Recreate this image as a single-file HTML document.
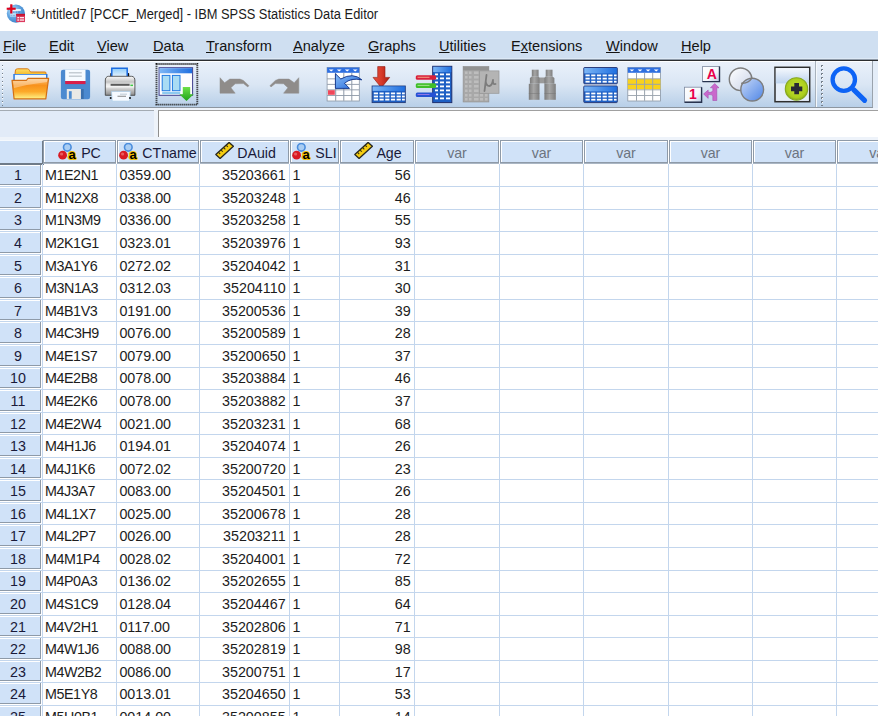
<!DOCTYPE html>
<html><head><meta charset="utf-8"><style>
*{margin:0;padding:0;box-sizing:border-box}
html,body{width:878px;height:716px;overflow:hidden;background:#fff;font-family:"Liberation Sans",sans-serif;position:relative}
#grid{position:absolute;left:0;top:0;width:878px;height:716px}
.corner{position:absolute;left:0;top:140px;width:44px;height:25px;background:#d0e2f8;border-right:2px solid #6f7b88;border-bottom:2px solid #6f7b88;border-top:1px solid #f5f9fd}
.vl{position:absolute;top:164px;width:1px;height:560px;background:#c3d6ed}
.hl{position:absolute;left:0;width:880px;height:1px;background:#c3d6ed}
.hb{position:absolute;top:140px;height:23px;background:#d0e2f8;border:1px solid #8e9aa8;box-shadow:inset 1px 1px 0 #fff,0 1px 0 #aab6c4;text-align:center;white-space:nowrap;overflow:hidden;color:#1a1a3a}
.hb span{font-size:14.2px;line-height:20px;display:inline-block;vertical-align:top;margin-top:1.6px}
.hb.var span{color:#6c7480}
.ic{display:inline-block;vertical-align:top;margin-top:2px;margin-right:4px;position:relative}
.ic.sc{margin-top:1px;margin-right:3px}
.rh{position:absolute;left:0;width:41px;background:#d0e2f8;border-right:1px solid #8e9aa8;border-bottom:1px solid #8e9aa8;box-shadow:inset 0 1px 0 #fff;text-align:center}
.rh span{position:absolute;left:0;width:36px;text-align:center;font-size:14.3px;line-height:16px;color:#1a1a3a}
.t{position:absolute;font-size:14.3px;line-height:16px;margin-top:-12.84px;white-space:nowrap;color:#1c1c1c}

#title{position:absolute;left:0;top:0;width:878px;height:31px;background:#fff}
#title .txt{position:absolute;left:31px;top:5px;font-size:14px;line-height:18px;color:#1b1b1b;white-space:nowrap;transform:scaleX(0.918);transform-origin:0 0}
#menu{position:absolute;left:0;top:31px;width:878px;height:27px;background:#cfdff1}
#menu span{position:absolute;top:5.5px;font-size:15.5px;line-height:17px;color:#141414;white-space:nowrap;transform:scaleX(0.94);transform-origin:0 0}
#menu u{text-decoration:underline;text-underline-offset:1px}
#ml1{position:absolute;left:0;top:58px;width:878px;height:1px;background:#dde9f6}
#ml2{position:absolute;left:0;top:59px;width:878px;height:1px;background:#8e9aa8}
#ml3{position:absolute;left:0;top:60px;width:878px;height:1px;background:#2b2d30}
#ml4{position:absolute;left:0;top:61px;width:878px;height:1px;background:#fdfeff}
#tb{position:absolute;left:0;top:62px;width:872px;height:45px;background:linear-gradient(#e9f0fa,#dae6f4 50%,#b8cfe8)}
#tb2{position:absolute;left:872px;top:61px;width:1px;height:47px;background:#9aa3ad}
#tbline{position:absolute;left:0;top:107px;width:873px;height:1px;background:#8d96a0}
#ce{position:absolute;left:0;top:108px;width:878px;height:32px;background:#eef3fa}
#namebox{position:absolute;left:0;top:110px;width:154px;height:26.5px;background:#e2ebf8;border-top:1px solid #a4abb3}
#cellin{position:absolute;left:158px;top:110px;width:720px;height:26.5px;background:#fff;border-top:1px solid #a0a0a0;border-left:1px solid #8f8f8f}

.t.s{letter-spacing:-0.4px}

#tb3{position:absolute;left:873px;top:61px;width:5px;height:47px;background:#e4edf8}

</style></head><body>
<div id="title"><div class="txt">*Untitled7 [PCCF_Merged] - IBM SPSS Statistics Data Editor</div></div>
<div id="menu">
<span style="left:3px"><u>F</u>ile</span>
<span style="left:48.5px"><u>E</u>dit</span>
<span style="left:97px"><u>V</u>iew</span>
<span style="left:152.5px"><u>D</u>ata</span>
<span style="left:205.5px"><u>T</u>ransform</span>
<span style="left:292.5px"><u>A</u>nalyze</span>
<span style="left:367.5px"><u>G</u>raphs</span>
<span style="left:438.5px"><u>U</u>tilities</span>
<span style="left:510.5px">E<u>x</u>tensions</span>
<span style="left:605.5px"><u>W</u>indow</span>
<span style="left:680.5px"><u>H</u>elp</span>
</div>
<div id="ml1"></div><div id="ml2"></div><div id="ml3"></div><div id="ml4"></div>
<div id="tb"></div>
<div id="tb2"></div><div id="tb3"></div>
<div id="tbline"></div>
<div id="ce"></div>
<div id="namebox"></div>
<div id="cellin"></div>
<svg id="icons" width="878" height="112" viewBox="0 0 878 112" style="position:absolute;left:0;top:0">
<defs>
<linearGradient id="gFold" x1="0" y1="0" x2="0" y2="1"><stop offset="0" stop-color="#fcc37a"/><stop offset="0.35" stop-color="#f8921c"/><stop offset="0.65" stop-color="#fcaa2a"/><stop offset="1" stop-color="#fff488"/></linearGradient>
<linearGradient id="gTab" x1="0" y1="0" x2="0" y2="1"><stop offset="0" stop-color="#ffe066"/><stop offset="1" stop-color="#f0b020"/></linearGradient>
<linearGradient id="gHdr" x1="0" y1="0" x2="1" y2="0"><stop offset="0" stop-color="#7db6f5"/><stop offset="1" stop-color="#1f6fe0"/></linearGradient>
<linearGradient id="gPaper" x1="0" y1="0" x2="0" y2="1"><stop offset="0" stop-color="#9fd0fb"/><stop offset="1" stop-color="#f4faff"/></linearGradient>
<linearGradient id="gPrn" x1="0" y1="0" x2="0" y2="1"><stop offset="0" stop-color="#f2f2f2"/><stop offset="0.5" stop-color="#d8d8d8"/><stop offset="1" stop-color="#a8a8a8"/></linearGradient>
<linearGradient id="gRed" x1="0" y1="0" x2="1" y2="0"><stop offset="0" stop-color="#e2503c"/><stop offset="0.5" stop-color="#d83a2a"/><stop offset="1" stop-color="#a81c10"/></linearGradient>
<linearGradient id="gC1" x1="0" y1="0" x2="1" y2="1"><stop offset="0" stop-color="#ffffff"/><stop offset="1" stop-color="#c9d3e8"/></linearGradient>
<linearGradient id="gC2" x1="0" y1="0" x2="1" y2="1"><stop offset="0" stop-color="#c7d8f7"/><stop offset="1" stop-color="#4f86e6"/></linearGradient>
<linearGradient id="gAdd" x1="0" y1="0" x2="0" y2="1"><stop offset="0" stop-color="#f4f8fd"/><stop offset="1" stop-color="#bdd3ee"/></linearGradient>
<linearGradient id="gArr" x1="0" y1="0" x2="1" y2="1"><stop offset="0" stop-color="#8cc0f8"/><stop offset="1" stop-color="#1d62d8"/></linearGradient>
<linearGradient id="gGreen" x1="0" y1="0" x2="0" y2="1"><stop offset="0" stop-color="#6ee04a"/><stop offset="1" stop-color="#1fa31a"/></linearGradient>
<pattern id="grip" x="0" y="0" width="4" height="4" patternUnits="userSpaceOnUse"><rect x="1" y="1" width="2" height="2" fill="#75808c"/><rect x="2" y="2" width="1.2" height="1.2" fill="#fff"/></pattern>
</defs>
<!-- app icon -->
<defs><radialGradient id="gApp" cx="0.35" cy="0.35" r="0.7"><stop offset="0" stop-color="#c4e6fb"/><stop offset="0.55" stop-color="#5fa3e0"/><stop offset="1" stop-color="#3b7fc8"/></radialGradient></defs>
<circle cx="15.9" cy="13.6" r="9.1" fill="url(#gApp)"/>
<rect x="12.7" y="9.2" width="8.1" height="1.6" fill="#fff"/>
<g fill="#2f6fc0" opacity="0.85"><rect x="13" y="11.6" width="1.6" height="1"/><rect x="15.6" y="11.6" width="1.6" height="1"/><rect x="18.2" y="11.6" width="1.6" height="1"/><rect x="10.6" y="15" width="1.6" height="1"/><rect x="13" y="15" width="2" height="1"/></g>
<rect x="10" y="13.2" width="6" height="3.6" fill="#e3f3fc" opacity="0.5"/>
<rect x="16.2" y="13.9" width="8.8" height="8.2" fill="#dc3a5e"/>
<rect x="16.2" y="13.9" width="8.8" height="1.8" fill="#c8102e"/>
<g fill="#fff" opacity="0.9"><rect x="17.3" y="17" width="1.8" height="1.3"/><rect x="19.8" y="17" width="4.2" height="1.3"/><rect x="17.3" y="19.4" width="1.8" height="1.3"/><rect x="19.8" y="19.4" width="4.2" height="1.3"/></g>
<rect x="6.7" y="7.7" width="9" height="2.1" fill="#e0001c"/>
<rect x="10.2" y="4.3" width="2.2" height="9.2" fill="#e0001c"/>
<!-- grips -->
<rect x="2" y="63" width="3" height="43" fill="url(#grip)"/>
<rect x="820" y="63" width="3" height="43" fill="url(#grip)"/>
<!-- separators -->
<rect x="815" y="61" width="1" height="46" fill="#a8b2bd"/>
<rect x="816" y="61" width="1" height="46" fill="#f4f8fc"/>
<!-- folder -->
<path d="M15 74 L15.5 70 Q16 68.8 17.5 68.8 L27.5 68.8 Q28.8 68.8 29.5 70.5 L30.5 72 L45 72 Q46 72 46 73 L46 76 L15 76 Z" fill="url(#gTab)" stroke="#d7781a" stroke-width="1"/>
<rect x="13.3" y="74" width="34.2" height="6" fill="#2a78e0"/>
<rect x="14.8" y="74.8" width="31.2" height="5.2" fill="#eef8ff"/>
<path d="M12 80.3 L26.5 80.3 L28 78.3 L48.6 78.3 L45.8 98.9 L14.1 98.9 Z" fill="url(#gFold)" stroke="#d36f14" stroke-width="1.2" stroke-linejoin="round"/>
<path d="M13 81 L26.5 81 L28 79 L47.5 79 L47 82 Q30 84 14 88 Z" fill="#fff" opacity="0.35"/>
<!-- save -->
<rect x="60.9" y="69.7" width="29.2" height="29.5" rx="2.2" fill="#4b8ad0"/>
<rect x="65.2" y="69.7" width="20.3" height="11.3" fill="#f6fbff"/>
<rect x="68.9" y="72.2" width="12.9" height="1.2" fill="#b9c1c9"/>
<rect x="68.9" y="75.6" width="12.9" height="1.2" fill="#b9c1c9"/>
<rect x="65.2" y="81" width="20.3" height="3.1" fill="#d81e4a"/>
<rect x="80.9" y="89" width="2.8" height="10" fill="#2f5f98" opacity="0.6"/>
<rect x="66.8" y="89" width="14.1" height="10" fill="#e9e9e6"/>
<rect x="68.9" y="91.2" width="2.8" height="7.6" fill="#4b8ad0"/>
<!-- print -->
<defs><linearGradient id="gPrn2" x1="0" y1="0" x2="0" y2="1"><stop offset="0" stop-color="#fafafa"/><stop offset="0.3" stop-color="#c4c4c4"/><stop offset="0.42" stop-color="#e8e8e8"/><stop offset="0.55" stop-color="#f4f4f4"/><stop offset="0.65" stop-color="#d0d0d0"/><stop offset="1" stop-color="#8a8a8a"/></linearGradient>
<linearGradient id="gPap2" x1="0" y1="0" x2="0" y2="1"><stop offset="0" stop-color="#8ccaf8"/><stop offset="1" stop-color="#ffffff"/></linearGradient></defs>
<rect x="110.3" y="73" width="2" height="4.5" rx="0.8" fill="#111"/><rect x="127.2" y="73" width="2" height="4.5" rx="0.8" fill="#111"/>
<path d="M111.8 78.8 L111.8 68.2 L127.2 68.2 L127.2 78.8" fill="url(#gPap2)" stroke="#1a6be0" stroke-width="1.5"/>
<path d="M105.3 95.3 L105.3 80 Q105.3 77.6 107.2 76.6 L108.5 76.3 L131.6 76.3 L133 76.6 Q134.9 77.6 134.9 80 L134.9 95.3 Z" fill="url(#gPrn2)" stroke="#3a3a3a" stroke-width="0.8"/>
<rect x="110.6" y="83.8" width="19" height="2" fill="#5a5a5a"/>
<rect x="130.4" y="84.6" width="2.6" height="1.5" fill="#3ccc44"/>
<path d="M111.5 91.4 L130.4 91.4 L129.6 101.2 L112.2 101.2 Z" fill="#f6faff" stroke="#a9cdea" stroke-width="0.7"/>
<rect x="117.5" y="95.8" width="8.5" height="0.8" fill="#6a6a6a"/><rect x="120" y="93.8" width="7" height="0.6" fill="#9aa7b4"/>
<circle cx="110.7" cy="98" r="1" fill="#111"/><circle cx="130" cy="98" r="1" fill="#111"/>
<!-- recall dialog -->
<rect x="156.5" y="64" width="40.8" height="40.6" fill="none" stroke="#1a1a1a" stroke-width="1.9" stroke-dasharray="1.1 0.9"/>
<rect x="159.1" y="67.7" width="33.5" height="27.6" fill="#fdfdff" stroke="#3e3e8c" stroke-width="1"/>
<rect x="159.6" y="68.2" width="32.5" height="5.1" fill="url(#gHdr)"/>
<rect x="162.2" y="75.4" width="7.7" height="15.3" fill="#a9dcf4" stroke="#1e78e0" stroke-width="1"/>
<rect x="172.4" y="75.4" width="7.6" height="15.3" fill="#a9dcf4" stroke="#1e78e0" stroke-width="1"/>
<rect x="162.2" y="91.8" width="18" height="2.4" fill="#8ccaf0"/>
<path d="M182.8 86.9 L190.2 86.9 L190.2 94.2 L193.7 94.2 L186.5 100.9 L179.3 94.2 L182.8 94.2 Z" fill="url(#gGreen)"/>
<!-- undo / redo -->
<path d="M220 77.7 L224.6 82.7 L229.8 79.1 L240 79.1 L243.4 80.4 L248.9 85.7 L247.8 86.9 L243.5 83.6 L235.2 83.8 L230.9 87.7 L235.2 93.2 L220 93.2 Z" fill="#8f8c8a" stroke="#8f8c8a" stroke-width="0.5" stroke-linejoin="round"/>
<path d="M298.8 77.7 L294.2 82.7 L289.0 79.1 L278.8 79.1 L275.4 80.4 L269.9 85.7 L271.0 86.9 L275.3 83.6 L283.6 83.8 L287.9 87.7 L283.6 93.2 L298.8 93.2 Z" fill="#8f8c8a" stroke="#8f8c8a" stroke-width="0.5" stroke-linejoin="round"/>
<!-- go to case -->
<rect x="327.1" y="67.5" width="32.2" height="33.5" fill="#fff" stroke="#8a96a5" stroke-width="0.8"/>
<rect x="327.1" y="67.5" width="32.2" height="5.3" fill="#2e6fe0"/>
<g fill="#fff"><path d="M328.8 69.4 L333.6 69.4 L331.2 71.6Z"/><path d="M336.8 69.4 L341.6 69.4 L339.2 71.6Z"/><path d="M344.8 69.4 L349.6 69.4 L347.2 71.6Z"/><path d="M352.8 69.4 L357.6 69.4 L355.2 71.6Z"/></g>
<g fill="#8f9aa8"><rect x="335.2" y="72.8" width="1" height="28"/><rect x="343.3" y="72.8" width="1" height="28"/><rect x="351.3" y="72.8" width="1" height="28"/>
<rect x="327.1" y="78.4" width="32" height="0.9"/><rect x="327.1" y="83.9" width="32" height="0.9"/><rect x="327.1" y="89.4" width="32" height="0.9"/><rect x="327.1" y="95" width="32" height="0.9"/></g>
<rect x="328" y="90.2" width="6.8" height="4.6" fill="#f0475a"/>
<path d="M335.4 73.7 L335.4 88.4 L349.5 88.4 L344.5 83.3 Q351 77.5 361.8 79.8 Q353 72 340.8 79 Z" fill="url(#gArr)" stroke="#0c2f86" stroke-width="0.9" stroke-linejoin="round"/>
<!-- go to variable -->
<path d="M377.7 66.6 L385 66.6 L385 77.4 L389.7 77.4 L381.4 87.8 L373 77.4 L377.7 77.4 Z" fill="url(#gRed)" stroke="#8f1a10" stroke-width="0.6"/>
<rect x="372.1" y="86" width="33.2" height="16.6" fill="#1d5fc4" stroke="#233b7a" stroke-width="0.9"/>
<rect x="372.6" y="86.4" width="32.2" height="4.5" fill="url(#gHdr)"/>
<g fill="#fff"><rect x="373.8" y="92.5" width="4.2" height="1.8"/><rect x="379.5" y="92.5" width="4.2" height="1.8"/><rect x="385.2" y="92.5" width="4.2" height="1.8"/><rect x="390.9" y="92.5" width="4.2" height="1.8"/><rect x="396.6" y="92.5" width="4.2" height="1.8"/><rect x="402" y="92.5" width="2.8" height="1.8"/>
<rect x="373.8" y="95.6" width="4.2" height="1.8"/><rect x="379.5" y="95.6" width="4.2" height="1.8"/><rect x="385.2" y="95.6" width="4.2" height="1.8"/><rect x="390.9" y="95.6" width="4.2" height="1.8"/><rect x="396.6" y="95.6" width="4.2" height="1.8"/><rect x="402" y="95.6" width="2.8" height="1.8"/>
<rect x="373.8" y="98.7" width="4.2" height="1.8"/><rect x="379.5" y="98.7" width="4.2" height="1.8"/><rect x="385.2" y="98.7" width="4.2" height="1.8"/><rect x="390.9" y="98.7" width="4.2" height="1.8"/><rect x="396.6" y="98.7" width="4.2" height="1.8"/><rect x="402" y="98.7" width="2.8" height="1.8"/></g>
<!-- variables -->
<rect x="432.7" y="66.3" width="19.1" height="36.3" fill="#1d5fc4" stroke="#1e2f6e" stroke-width="1"/>
<rect x="433.2" y="66.8" width="18.1" height="5.3" fill="url(#gHdr)"/>
<g fill="#fff">
<rect x="435" y="73.5" width="3" height="1.8"/><rect x="440" y="73.5" width="4" height="1.8"/><rect x="446" y="73.5" width="4" height="1.8"/>
<rect x="435" y="77.5" width="3" height="1.8"/><rect x="440" y="77.5" width="4" height="1.8"/><rect x="446" y="77.5" width="4" height="1.8"/>
<rect x="435" y="81.5" width="3" height="1.8"/><rect x="440" y="81.5" width="4" height="1.8"/><rect x="446" y="81.5" width="4" height="1.8"/>
<rect x="435" y="85.5" width="3" height="1.8"/><rect x="440" y="85.5" width="4" height="1.8"/><rect x="446" y="85.5" width="4" height="1.8"/>
<rect x="435" y="89.5" width="3" height="1.8"/><rect x="440" y="89.5" width="4" height="1.8"/><rect x="446" y="89.5" width="4" height="1.8"/>
<rect x="435" y="93.5" width="3" height="1.8"/><rect x="440" y="93.5" width="4" height="1.8"/><rect x="446" y="93.5" width="4" height="1.8"/>
<rect x="435" y="97.5" width="3" height="1.8"/><rect x="440" y="97.5" width="4" height="1.8"/><rect x="446" y="97.5" width="4" height="1.8"/>
</g>
<rect x="415.8" y="75.2" width="20.3" height="4.6" rx="1.5" fill="#d8203a"/>
<rect x="417.5" y="76.8" width="12" height="0.9" fill="#f7b08c"/>
<rect x="415.8" y="83.2" width="20.3" height="4.9" rx="1.5" fill="#3fbf2a"/>
<rect x="417.5" y="84.9" width="12" height="0.9" fill="#aee59a"/>
<rect x="415.8" y="92.4" width="20.3" height="4.6" rx="1.5" fill="#2652d4"/>
<rect x="417.5" y="94" width="12" height="0.9" fill="#9b7be8"/>
<!-- disabled mu table -->
<rect x="463.1" y="66.6" width="25.8" height="35.4" fill="#a8a8a8" stroke="#909090" stroke-width="0.6"/>
<rect x="463.1" y="66.6" width="25.8" height="3.8" fill="#929292"/>
<g fill="#bdbdbd">
<rect x="465" y="71.5" width="2.5" height="2.5"/><rect x="469" y="71.5" width="2.5" height="2.5"/><rect x="474" y="71.5" width="4.5" height="2.5"/>
<rect x="465" y="76" width="2.5" height="2.5"/><rect x="469" y="76" width="2.5" height="2.5"/><rect x="474" y="76" width="4.5" height="2.5"/>
<rect x="465" y="80.5" width="2.5" height="2.5"/><rect x="469" y="80.5" width="2.5" height="2.5"/><rect x="474" y="80.5" width="4.5" height="2.5"/>
<rect x="465" y="85" width="2.5" height="2.5"/><rect x="469" y="85" width="2.5" height="2.5"/><rect x="474" y="85" width="4.5" height="2.5"/>
<rect x="465" y="89.5" width="2.5" height="2.5"/><rect x="469" y="89.5" width="2.5" height="2.5"/><rect x="474" y="89.5" width="4.5" height="2.5"/>
<rect x="465" y="94" width="2.5" height="2.5"/><rect x="469" y="94" width="2.5" height="2.5"/><rect x="474" y="94" width="4.5" height="2.5"/><rect x="480" y="94" width="3" height="2.5"/><rect x="485" y="94" width="2.5" height="2.5"/>
<rect x="465" y="98" width="2.5" height="2.5"/><rect x="469" y="98" width="2.5" height="2.5"/><rect x="474" y="98" width="4.5" height="2.5"/><rect x="480" y="98" width="3" height="2.5"/><rect x="485" y="98" width="2.5" height="2.5"/>
</g>
<rect x="479.4" y="70.9" width="19.6" height="22.4" fill="#b4b4b4" stroke="#969696" stroke-width="0.7"/>
<path d="M486.5 75 L484.5 91 M485.7 81 Q486 86 489.5 86 Q492 85.5 493 80 M493 80 Q492.5 85 495.5 84" fill="none" stroke="#7c7c7c" stroke-width="1.8" stroke-linecap="round"/>
<!-- binoculars -->
<defs><linearGradient id="gBin" x1="0" y1="0" x2="1" y2="0"><stop offset="0" stop-color="#7c7c7c"/><stop offset="0.45" stop-color="#a6a6a6"/><stop offset="1" stop-color="#7e7e7e"/></linearGradient></defs>
<rect x="539" y="77.5" width="6" height="5.8" fill="#9a9a9a"/>
<g fill="url(#gBin)">
<rect x="531.8" y="69.7" width="6.8" height="6.9"/>
<path d="M531.8 76.4 L538.6 76.4 L539.5 78 L539.5 83.8 L529.9 83.8 L529.9 78 Z"/>
<rect x="528.8" y="83.8" width="10.7" height="16"/>
<rect x="545.7" y="69.7" width="6.8" height="6.9"/>
<path d="M545.7 76.4 L552.5 76.4 L554.4 78 L554.4 83.8 L544.4 83.8 L544.4 78 Z"/>
<rect x="544.4" y="83.8" width="11.4" height="16"/>
</g>
<rect x="528.8" y="93" width="10.7" height="0.8" fill="#777" opacity="0.6"/><rect x="544.4" y="93" width="11.4" height="0.8" fill="#777" opacity="0.6"/>
<!-- split file -->
<g>
<rect x="583.8" y="67.5" width="33.5" height="16.3" rx="0.8" fill="#1d5fc4" stroke="#223270" stroke-width="0.9"/>
<rect x="584.3" y="68" width="32.5" height="5.4" fill="url(#gHdr)"/>
<rect x="583.8" y="86" width="33.5" height="16.6" rx="0.8" fill="#1d5fc4" stroke="#223270" stroke-width="0.9"/>
<rect x="584.3" y="86.5" width="32.5" height="4.9" fill="url(#gHdr)"/>
<g fill="#fff">
<rect x="585.5" y="74.5" width="4.2" height="1.8"/><rect x="591.2" y="74.5" width="4.2" height="1.8"/><rect x="596.9" y="74.5" width="4.2" height="1.8"/><rect x="602.6" y="74.5" width="4.2" height="1.8"/><rect x="608.3" y="74.5" width="4.2" height="1.8"/><rect x="614" y="74.5" width="2.6" height="1.8"/>
<rect x="585.5" y="77.7" width="4.2" height="1.8"/><rect x="591.2" y="77.7" width="4.2" height="1.8"/><rect x="596.9" y="77.7" width="4.2" height="1.8"/><rect x="602.6" y="77.7" width="4.2" height="1.8"/><rect x="608.3" y="77.7" width="4.2" height="1.8"/><rect x="614" y="77.7" width="2.6" height="1.8"/>
<rect x="585.5" y="80.8" width="4.2" height="1.8"/><rect x="591.2" y="80.8" width="4.2" height="1.8"/><rect x="596.9" y="80.8" width="4.2" height="1.8"/><rect x="602.6" y="80.8" width="4.2" height="1.8"/><rect x="608.3" y="80.8" width="4.2" height="1.8"/><rect x="614" y="80.8" width="2.6" height="1.8"/>
<rect x="585.5" y="92.6" width="4.2" height="1.8"/><rect x="591.2" y="92.6" width="4.2" height="1.8"/><rect x="596.9" y="92.6" width="4.2" height="1.8"/><rect x="602.6" y="92.6" width="4.2" height="1.8"/><rect x="608.3" y="92.6" width="4.2" height="1.8"/><rect x="614" y="92.6" width="2.6" height="1.8"/>
<rect x="585.5" y="95.7" width="4.2" height="1.8"/><rect x="591.2" y="95.7" width="4.2" height="1.8"/><rect x="596.9" y="95.7" width="4.2" height="1.8"/><rect x="602.6" y="95.7" width="4.2" height="1.8"/><rect x="608.3" y="95.7" width="4.2" height="1.8"/><rect x="614" y="95.7" width="2.6" height="1.8"/>
<rect x="585.5" y="98.8" width="4.2" height="1.8"/><rect x="591.2" y="98.8" width="4.2" height="1.8"/><rect x="596.9" y="98.8" width="4.2" height="1.8"/><rect x="602.6" y="98.8" width="4.2" height="1.8"/><rect x="608.3" y="98.8" width="4.2" height="1.8"/><rect x="614" y="98.8" width="2.6" height="1.8"/>
</g></g>
<!-- select cases -->
<rect x="627.8" y="67.5" width="32.6" height="33.5" fill="#fff" stroke="#8a96a5" stroke-width="0.8"/>
<rect x="627.8" y="67.5" width="32.6" height="5.3" fill="#2e6fe0"/>
<g fill="#fff"><path d="M629.5 69.4 L634.3 69.4 L631.9 71.6Z"/><path d="M637.6 69.4 L642.4 69.4 L640 71.6Z"/><path d="M645.7 69.4 L650.5 69.4 L648.1 71.6Z"/><path d="M653.8 69.4 L658.6 69.4 L656.2 71.6Z"/></g>
<rect x="627.8" y="78.8" width="32.6" height="10.6" fill="#f9d21c"/>
<g fill="#9aa3ad"><rect x="636" y="72.8" width="1" height="28"/><rect x="644.1" y="72.8" width="1" height="28"/><rect x="652.2" y="72.8" width="1" height="28"/>
<rect x="627.8" y="78.4" width="32.5" height="0.9"/><rect x="627.8" y="83.8" width="32.5" height="1"/><rect x="627.8" y="89.4" width="32.5" height="0.9"/><rect x="627.8" y="95" width="32.5" height="0.9"/></g>
<!-- value labels -->
<defs><linearGradient id="gBox" x1="0" y1="0" x2="1" y2="1"><stop offset="0" stop-color="#ffffff"/><stop offset="0.6" stop-color="#f3f6fb"/><stop offset="1" stop-color="#b9c9e2"/></linearGradient></defs>
<rect x="702.5" y="66.6" width="17" height="15" fill="url(#gBox)" stroke="#7f8aa0" stroke-width="0.8"/>
<path d="M702.5 81.6 L719.5 81.6 L719.5 66.6" fill="none" stroke="#27324e" stroke-width="1.4"/>
<text x="711.8" y="79.2" font-family="Liberation Sans" font-weight="bold" font-size="14" fill="#e8004a" text-anchor="middle">A</text>
<rect x="684.6" y="87.2" width="17" height="15" fill="url(#gBox)" stroke="#7f8aa0" stroke-width="0.8"/>
<path d="M684.6 102.2 L701.6 102.2 L701.6 87.2" fill="none" stroke="#27324e" stroke-width="1.4"/>
<text x="692.8" y="99.3" font-family="Liberation Sans" font-weight="bold" font-size="14" fill="#e8004a" text-anchor="middle">1</text>
<path d="M714.7 83.5 L719 87.8 L716.8 87.8 L716.8 100.5 L712.8 100.5 L712.8 96 Q712.2 94.6 710 94.6 L708.2 94.6 L708.2 98.4 L703.6 94 L708.2 90 L708.2 92.3 L710.5 92.3 Q712.2 92.3 712.8 90.5 L712.8 87.8 L710.4 87.8 Z" fill="#c968cc" stroke="#a040a8" stroke-width="0.5" stroke-linejoin="round"/>
<!-- circles -->
<circle cx="740.6" cy="79.3" r="11.3" fill="url(#gC1)" stroke="#7d7d7d" stroke-width="1.4"/>
<circle cx="752.2" cy="89.6" r="11.4" fill="url(#gC2)" stroke="#7d7d7d" stroke-width="1.4"/>
<path d="M741.2 83.2 A11.3 11.3 0 0 0 751.9 78.2" fill="none" stroke="#7d7d7d" stroke-width="1.4"/>
<!-- add-on -->
<rect x="775" y="67.3" width="34.7" height="34.4" fill="#e4edf9" stroke="#2e2e2e" stroke-width="1.5"/>
<rect x="775.8" y="68.1" width="33.1" height="15.3" fill="url(#gAdd)"/>
<defs><radialGradient id="gGr" cx="0.5" cy="0.45" r="0.55"><stop offset="0" stop-color="#c8e236"/><stop offset="0.8" stop-color="#aacd1c"/><stop offset="1" stop-color="#88a81e"/></radialGradient></defs><circle cx="796.5" cy="88.9" r="11.2" fill="url(#gGr)" stroke="#86a820" stroke-width="1.1"/>
<path d="M794.3 83 L799 83 L799 86.6 L802.3 86.6 L802.3 91.2 L799 91.2 L799 94.3 L794.3 94.3 L794.3 91.2 L791 91.2 L791 86.6 L794.3 86.6 Z" fill="#2a2a35"/>
<!-- search -->
<circle cx="843.8" cy="79.6" r="11.2" fill="none" stroke="#0d63f5" stroke-width="4.3"/>
<path d="M853.6 89.6 L864.6 100.4" stroke="#0d63f5" stroke-width="5" stroke-linecap="round"/>
</svg>

<div id="grid">
<div class="corner"></div>
<div class="vl" style="left:42px"></div><div class="vl" style="left:116px"></div><div class="vl" style="left:199px"></div><div class="vl" style="left:289px"></div><div class="vl" style="left:339px"></div><div class="vl" style="left:414px"></div><div class="vl" style="left:499px"></div><div class="vl" style="left:583px"></div><div class="vl" style="left:668px"></div><div class="vl" style="left:752px"></div><div class="vl" style="left:836px"></div><div class="hl" style="top:186px"></div><div class="hl" style="top:209px"></div><div class="hl" style="top:231px"></div><div class="hl" style="top:254px"></div><div class="hl" style="top:276px"></div><div class="hl" style="top:299px"></div><div class="hl" style="top:321px"></div><div class="hl" style="top:344px"></div><div class="hl" style="top:367px"></div><div class="hl" style="top:389px"></div><div class="hl" style="top:412px"></div><div class="hl" style="top:434px"></div><div class="hl" style="top:457px"></div><div class="hl" style="top:479px"></div><div class="hl" style="top:502px"></div><div class="hl" style="top:524px"></div><div class="hl" style="top:547px"></div><div class="hl" style="top:570px"></div><div class="hl" style="top:592px"></div><div class="hl" style="top:615px"></div><div class="hl" style="top:637px"></div><div class="hl" style="top:660px"></div><div class="hl" style="top:682px"></div><div class="hl" style="top:705px"></div><div class="hl" style="top:728px"></div><div class="hb" style="left:43px;width:73px"><svg class="ic" width="19" height="18" viewBox="0 0 19 18"><circle cx="9.3" cy="4.3" r="3.8" fill="#a9cdf3" stroke="#4b8ddc" stroke-width="1.6"/><circle cx="4.6" cy="12.2" r="4.4" fill="#d81a24"/><circle cx="3.6" cy="11" r="1.6" fill="#f07a7a" opacity="0.7"/><text x="14" y="16.4" font-family="Liberation Sans" font-weight="bold" font-size="13" fill="#000" stroke="#f2c000" stroke-width="2.2" paint-order="stroke" stroke-linejoin="round" text-anchor="middle">a</text></svg><span>PC</span></div><div class="hb" style="left:117px;width:82px"><svg class="ic" width="19" height="18" viewBox="0 0 19 18"><circle cx="9.3" cy="4.3" r="3.8" fill="#a9cdf3" stroke="#4b8ddc" stroke-width="1.6"/><circle cx="4.6" cy="12.2" r="4.4" fill="#d81a24"/><circle cx="3.6" cy="11" r="1.6" fill="#f07a7a" opacity="0.7"/><text x="14" y="16.4" font-family="Liberation Sans" font-weight="bold" font-size="13" fill="#000" stroke="#f2c000" stroke-width="2.2" paint-order="stroke" stroke-linejoin="round" text-anchor="middle">a</text></svg><span>CTname</span></div><div class="hb" style="left:200px;width:89px"><svg class="ic sc" width="21" height="17" viewBox="0 0 21 17"><path d="M16.1 0.4 L20.4 4.3 L7.1 16.4 L2.8 12.6 Z" fill="#f4cc10" stroke="#262620" stroke-width="1.3" stroke-linejoin="round"/><g stroke="#3a3410" stroke-width="1.1"><path d="M5.37 10.22 L7.14 12.13"/><path d="M7.94 7.84 L9.71 9.75"/><path d="M10.52 5.46 L12.29 7.37"/><path d="M13.09 3.08 L14.86 4.99"/></g></svg><span>DAuid</span></div><div class="hb" style="left:290px;width:49px"><svg class="ic" width="19" height="18" viewBox="0 0 19 18"><circle cx="9.3" cy="4.3" r="3.8" fill="#a9cdf3" stroke="#4b8ddc" stroke-width="1.6"/><circle cx="4.6" cy="12.2" r="4.4" fill="#d81a24"/><circle cx="3.6" cy="11" r="1.6" fill="#f07a7a" opacity="0.7"/><text x="14" y="16.4" font-family="Liberation Sans" font-weight="bold" font-size="13" fill="#000" stroke="#f2c000" stroke-width="2.2" paint-order="stroke" stroke-linejoin="round" text-anchor="middle">a</text></svg><span>SLI</span></div><div class="hb" style="left:340px;width:74px"><svg class="ic sc" width="21" height="17" viewBox="0 0 21 17"><path d="M16.1 0.4 L20.4 4.3 L7.1 16.4 L2.8 12.6 Z" fill="#f4cc10" stroke="#262620" stroke-width="1.3" stroke-linejoin="round"/><g stroke="#3a3410" stroke-width="1.1"><path d="M5.37 10.22 L7.14 12.13"/><path d="M7.94 7.84 L9.71 9.75"/><path d="M10.52 5.46 L12.29 7.37"/><path d="M13.09 3.08 L14.86 4.99"/></g></svg><span>Age</span></div><div class="hb var" style="left:415px;width:84px"><span>var</span></div><div class="hb var" style="left:500px;width:83px"><span>var</span></div><div class="hb var" style="left:584px;width:84px"><span>var</span></div><div class="hb var" style="left:669px;width:83px"><span>var</span></div><div class="hb var" style="left:753px;width:83px"><span>var</span></div><div class="hb var" style="left:837px;width:84px"><span>var</span></div><div class="rh" style="top:165px;height:20px"><span style="top:2.36px">1</span></div><div class="t s" style="top:180.20px;left:44.90px">M1E2N1</div><div class="t" style="top:180.20px;left:119.40px">0359.00</div><div class="t r" style="top:180.20px;right:592.40px">35203661</div><div class="t" style="top:180.20px;left:292.40px">1</div><div class="t r" style="top:180.20px;right:467.40px">56</div><div class="rh" style="top:187px;height:21px"><span style="top:2.92px">2</span></div><div class="t s" style="top:202.76px;left:44.90px">M1N2X8</div><div class="t" style="top:202.76px;left:119.40px">0338.00</div><div class="t r" style="top:202.76px;right:592.40px">35203248</div><div class="t" style="top:202.76px;left:292.40px">1</div><div class="t r" style="top:202.76px;right:467.40px">46</div><div class="rh" style="top:210px;height:20px"><span style="top:2.48px">3</span></div><div class="t s" style="top:225.32px;left:44.90px">M1N3M9</div><div class="t" style="top:225.32px;left:119.40px">0336.00</div><div class="t r" style="top:225.32px;right:592.40px">35203258</div><div class="t" style="top:225.32px;left:292.40px">1</div><div class="t r" style="top:225.32px;right:467.40px">55</div><div class="rh" style="top:232px;height:21px"><span style="top:3.04px">4</span></div><div class="t s" style="top:247.88px;left:44.90px">M2K1G1</div><div class="t" style="top:247.88px;left:119.40px">0323.01</div><div class="t r" style="top:247.88px;right:592.40px">35203976</div><div class="t" style="top:247.88px;left:292.40px">1</div><div class="t r" style="top:247.88px;right:467.40px">93</div><div class="rh" style="top:255px;height:20px"><span style="top:2.60px">5</span></div><div class="t s" style="top:270.44px;left:44.90px">M3A1Y6</div><div class="t" style="top:270.44px;left:119.40px">0272.02</div><div class="t r" style="top:270.44px;right:592.40px">35204042</div><div class="t" style="top:270.44px;left:292.40px">1</div><div class="t r" style="top:270.44px;right:467.40px">31</div><div class="rh" style="top:277px;height:21px"><span style="top:3.16px">6</span></div><div class="t s" style="top:293.00px;left:44.90px">M3N1A3</div><div class="t" style="top:293.00px;left:119.40px">0312.03</div><div class="t r" style="top:293.00px;right:592.40px">35204110</div><div class="t" style="top:293.00px;left:292.40px">1</div><div class="t r" style="top:293.00px;right:467.40px">30</div><div class="rh" style="top:300px;height:20px"><span style="top:2.72px">7</span></div><div class="t s" style="top:315.56px;left:44.90px">M4B1V3</div><div class="t" style="top:315.56px;left:119.40px">0191.00</div><div class="t r" style="top:315.56px;right:592.40px">35200536</div><div class="t" style="top:315.56px;left:292.40px">1</div><div class="t r" style="top:315.56px;right:467.40px">39</div><div class="rh" style="top:322px;height:21px"><span style="top:3.28px">8</span></div><div class="t s" style="top:338.12px;left:44.90px">M4C3H9</div><div class="t" style="top:338.12px;left:119.40px">0076.00</div><div class="t r" style="top:338.12px;right:592.40px">35200589</div><div class="t" style="top:338.12px;left:292.40px">1</div><div class="t r" style="top:338.12px;right:467.40px">28</div><div class="rh" style="top:345px;height:21px"><span style="top:2.84px">9</span></div><div class="t s" style="top:360.68px;left:44.90px">M4E1S7</div><div class="t" style="top:360.68px;left:119.40px">0079.00</div><div class="t r" style="top:360.68px;right:592.40px">35200650</div><div class="t" style="top:360.68px;left:292.40px">1</div><div class="t r" style="top:360.68px;right:467.40px">37</div><div class="rh" style="top:368px;height:20px"><span style="top:2.40px">10</span></div><div class="t s" style="top:383.24px;left:44.90px">M4E2B8</div><div class="t" style="top:383.24px;left:119.40px">0078.00</div><div class="t r" style="top:383.24px;right:592.40px">35203884</div><div class="t" style="top:383.24px;left:292.40px">1</div><div class="t r" style="top:383.24px;right:467.40px">46</div><div class="rh" style="top:390px;height:21px"><span style="top:2.96px">11</span></div><div class="t s" style="top:405.80px;left:44.90px">M4E2K6</div><div class="t" style="top:405.80px;left:119.40px">0078.00</div><div class="t r" style="top:405.80px;right:592.40px">35203882</div><div class="t" style="top:405.80px;left:292.40px">1</div><div class="t r" style="top:405.80px;right:467.40px">37</div><div class="rh" style="top:413px;height:20px"><span style="top:2.52px">12</span></div><div class="t s" style="top:428.36px;left:44.90px">M4E2W4</div><div class="t" style="top:428.36px;left:119.40px">0021.00</div><div class="t r" style="top:428.36px;right:592.40px">35203231</div><div class="t" style="top:428.36px;left:292.40px">1</div><div class="t r" style="top:428.36px;right:467.40px">68</div><div class="rh" style="top:435px;height:21px"><span style="top:3.08px">13</span></div><div class="t s" style="top:450.92px;left:44.90px">M4H1J6</div><div class="t" style="top:450.92px;left:119.40px">0194.01</div><div class="t r" style="top:450.92px;right:592.40px">35204074</div><div class="t" style="top:450.92px;left:292.40px">1</div><div class="t r" style="top:450.92px;right:467.40px">26</div><div class="rh" style="top:458px;height:20px"><span style="top:2.64px">14</span></div><div class="t s" style="top:473.48px;left:44.90px">M4J1K6</div><div class="t" style="top:473.48px;left:119.40px">0072.02</div><div class="t r" style="top:473.48px;right:592.40px">35200720</div><div class="t" style="top:473.48px;left:292.40px">1</div><div class="t r" style="top:473.48px;right:467.40px">23</div><div class="rh" style="top:480px;height:21px"><span style="top:3.20px">15</span></div><div class="t s" style="top:496.04px;left:44.90px">M4J3A7</div><div class="t" style="top:496.04px;left:119.40px">0083.00</div><div class="t r" style="top:496.04px;right:592.40px">35204501</div><div class="t" style="top:496.04px;left:292.40px">1</div><div class="t r" style="top:496.04px;right:467.40px">26</div><div class="rh" style="top:503px;height:20px"><span style="top:2.76px">16</span></div><div class="t s" style="top:518.60px;left:44.90px">M4L1X7</div><div class="t" style="top:518.60px;left:119.40px">0025.00</div><div class="t r" style="top:518.60px;right:592.40px">35200678</div><div class="t" style="top:518.60px;left:292.40px">1</div><div class="t r" style="top:518.60px;right:467.40px">28</div><div class="rh" style="top:525px;height:21px"><span style="top:3.32px">17</span></div><div class="t s" style="top:541.16px;left:44.90px">M4L2P7</div><div class="t" style="top:541.16px;left:119.40px">0026.00</div><div class="t r" style="top:541.16px;right:592.40px">35203211</div><div class="t" style="top:541.16px;left:292.40px">1</div><div class="t r" style="top:541.16px;right:467.40px">28</div><div class="rh" style="top:548px;height:21px"><span style="top:2.88px">18</span></div><div class="t s" style="top:563.72px;left:44.90px">M4M1P4</div><div class="t" style="top:563.72px;left:119.40px">0028.02</div><div class="t r" style="top:563.72px;right:592.40px">35204001</div><div class="t" style="top:563.72px;left:292.40px">1</div><div class="t r" style="top:563.72px;right:467.40px">72</div><div class="rh" style="top:571px;height:20px"><span style="top:2.44px">19</span></div><div class="t s" style="top:586.28px;left:44.90px">M4P0A3</div><div class="t" style="top:586.28px;left:119.40px">0136.02</div><div class="t r" style="top:586.28px;right:592.40px">35202655</div><div class="t" style="top:586.28px;left:292.40px">1</div><div class="t r" style="top:586.28px;right:467.40px">85</div><div class="rh" style="top:593px;height:21px"><span style="top:3.00px">20</span></div><div class="t s" style="top:608.84px;left:44.90px">M4S1C9</div><div class="t" style="top:608.84px;left:119.40px">0128.04</div><div class="t r" style="top:608.84px;right:592.40px">35204467</div><div class="t" style="top:608.84px;left:292.40px">1</div><div class="t r" style="top:608.84px;right:467.40px">64</div><div class="rh" style="top:616px;height:20px"><span style="top:2.56px">21</span></div><div class="t s" style="top:631.40px;left:44.90px">M4V2H1</div><div class="t" style="top:631.40px;left:119.40px">0117.00</div><div class="t r" style="top:631.40px;right:592.40px">35202806</div><div class="t" style="top:631.40px;left:292.40px">1</div><div class="t r" style="top:631.40px;right:467.40px">71</div><div class="rh" style="top:638px;height:21px"><span style="top:3.12px">22</span></div><div class="t s" style="top:653.96px;left:44.90px">M4W1J6</div><div class="t" style="top:653.96px;left:119.40px">0088.00</div><div class="t r" style="top:653.96px;right:592.40px">35202819</div><div class="t" style="top:653.96px;left:292.40px">1</div><div class="t r" style="top:653.96px;right:467.40px">98</div><div class="rh" style="top:661px;height:20px"><span style="top:2.68px">23</span></div><div class="t s" style="top:676.52px;left:44.90px">M4W2B2</div><div class="t" style="top:676.52px;left:119.40px">0086.00</div><div class="t r" style="top:676.52px;right:592.40px">35200751</div><div class="t" style="top:676.52px;left:292.40px">1</div><div class="t r" style="top:676.52px;right:467.40px">17</div><div class="rh" style="top:683px;height:21px"><span style="top:3.24px">24</span></div><div class="t s" style="top:699.08px;left:44.90px">M5E1Y8</div><div class="t" style="top:699.08px;left:119.40px">0013.01</div><div class="t r" style="top:699.08px;right:592.40px">35204650</div><div class="t" style="top:699.08px;left:292.40px">1</div><div class="t r" style="top:699.08px;right:467.40px">53</div><div class="rh" style="top:706px;height:21px"><span style="top:2.80px">25</span></div><div class="t s" style="top:721.64px;left:44.90px">M5H0B1</div><div class="t" style="top:721.64px;left:119.40px">0014.00</div><div class="t r" style="top:721.64px;right:592.40px">35200855</div><div class="t" style="top:721.64px;left:292.40px">1</div><div class="t r" style="top:721.64px;right:467.40px">14</div>
</div>
</body></html>
